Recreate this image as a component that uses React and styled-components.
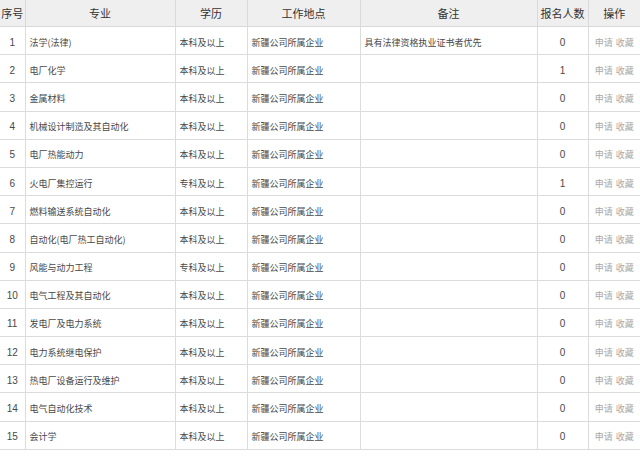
import React from "react";
import styled, { createGlobalStyle } from "styled-components";

const Global = createGlobalStyle`
  html, body { margin: 0; padding: 0; background: #fff; }
  body { font-family: "Noto Sans CJK SC", "Noto Sans", sans-serif; }
`;

const Table = styled.table`
  width: 640px;
  table-layout: fixed;
  border-collapse: collapse;
  color: #444;
`;

const HeadCell = styled.th`
  height: 26px;
  padding: 0;
  background: #efefef;
  border: 1px solid #d9d9d9;
  border-top: none;
  font-size: 11px;
  font-weight: normal;
  color: #333;
  text-align: center;
  white-space: nowrap;
  overflow: hidden;
  &:first-child { border-left: none; }
  &:last-child { border-right: none; }
`;

const Row = styled.tr`
  height: 28.2px;
`;

const Cell = styled.td`
  padding: 3px 0 0 ${(p) => (p.$align === "left" ? "4px" : "0")};
  border: 1px solid #dcdcdc;
  font-size: 9px;
  line-height: 13px;
  text-align: ${(p) => p.$align || "center"};
  color: ${(p) => (p.$muted ? "#a8a8a8" : "#484848")};
  white-space: nowrap;
  overflow: hidden;
  &:first-child { border-left: none; }
  &:last-child { border-right: none; }
`;

const Num = styled.span`
  font-family: "Liberation Sans", "DejaVu Sans", sans-serif;
  font-size: 10px;
`;

const Action = styled.span`
  & + & { margin-left: 3px; }
`;

const cols = [25, 150, 72, 113, 177, 51, 52];

const data = [
  ["法学(法律)", "本科及以上", "具有法律资格执业证书者优先", 0],
  ["电厂化学", "本科及以上", "", 1],
  ["金属材料", "本科及以上", "", 0],
  ["机械设计制造及其自动化", "本科及以上", "", 0],
  ["电厂热能动力", "本科及以上", "", 0],
  ["火电厂集控运行", "专科及以上", "", 1],
  ["燃料输送系统自动化", "本科及以上", "", 0],
  ["自动化(电厂热工自动化)", "本科及以上", "", 0],
  ["风能与动力工程", "专科及以上", "", 0],
  ["电气工程及其自动化", "本科及以上", "", 0],
  ["发电厂及电力系统", "本科及以上", "", 0],
  ["电力系统继电保护", "本科及以上", "", 0],
  ["热电厂设备运行及维护", "本科及以上", "", 0],
  ["电气自动化技术", "本科及以上", "", 0],
  ["会计学", "本科及以上", "", 0],
];

export default function App() {
  return (
    <>
      <Global />
      <Table>
        <colgroup>
          {cols.map((w, i) => (
            <col key={i} style={{ width: w }} />
          ))}
        </colgroup>
        <thead>
          <tr>
            {["序号", "专业", "学历", "工作地点", "备注", "报名人数", "操作"].map((h) => (
              <HeadCell key={h}>{h}</HeadCell>
            ))}
          </tr>
        </thead>
        <tbody>
          {data.map(([major, edu, note, count], i) => (
            <Row key={i}>
              <Cell><Num>{i + 1}</Num></Cell>
              <Cell $align="left">{major}</Cell>
              <Cell $align="left">{edu}</Cell>
              <Cell $align="left">新疆公司所属企业</Cell>
              <Cell $align="left">{note}</Cell>
              <Cell><Num>{count}</Num></Cell>
              <Cell $muted>
                <Action>申请</Action>
                <Action>收藏</Action>
              </Cell>
            </Row>
          ))}
        </tbody>
      </Table>
    </>
  );
}
